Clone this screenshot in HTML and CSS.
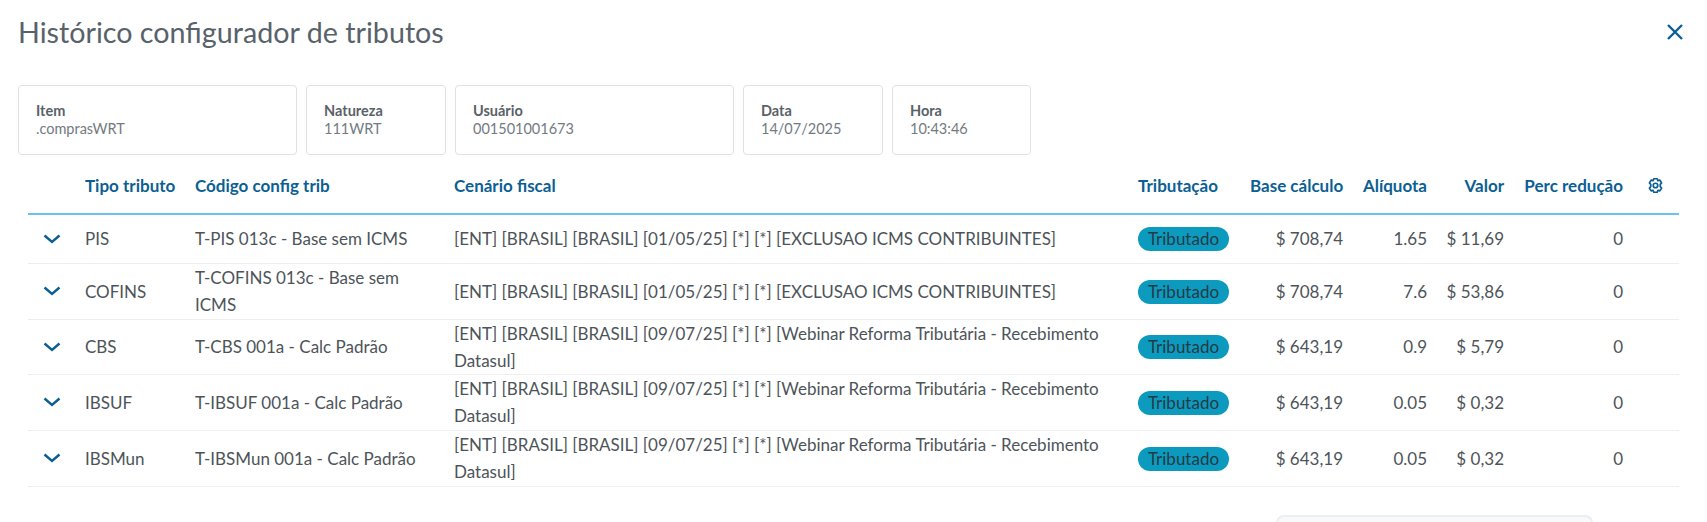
FILE: index.html
```html
<!DOCTYPE html>
<html lang="pt-BR">
<head>
    <meta charset="UTF-8">
    <title>Histórico configurador de tributos</title>
    <link rel="stylesheet" href="styles.css">
</head>
<body>
    <div class="modal">
        <div class="modal-header">
            <h1>Histórico configurador de tributos</h1>
            <button class="close" aria-label="Fechar">
                <svg width="18" height="18" viewBox="0 0 18 18"><path d="M2 2 L16 16 M16 2 L2 16" fill="none" stroke="#0c5f93" stroke-width="2.4"/></svg>
            </button>
        </div>
        <div class="cards">
            <div class="card card-item"><b>Item</b><span>.comprasWRT</span></div>
            <div class="card card-nat"><b>Natureza</b><span>111WRT</span></div>
            <div class="card card-user"><b>Usuário</b><span>001501001673</span></div>
            <div class="card card-date"><b>Data</b><span>14/07/2025</span></div>
            <div class="card card-hour"><b>Hora</b><span>10:43:46</span></div>
        </div>
        <table class="grid">
            <colgroup>
                <col class="c-exp"><col class="c-tipo"><col class="c-cod"><col class="c-cen"><col class="c-trib">
                <col class="c-base"><col class="c-aliq"><col class="c-valor"><col class="c-perc"><col class="c-cfg">
            </colgroup>
            <thead>
                <tr>
                    <th></th>
                    <th>Tipo tributo</th>
                    <th>Código config trib</th>
                    <th>Cenário fiscal</th>
                    <th>Tributação</th>
                    <th class="num">Base cálculo</th>
                    <th class="num">Alíquota</th>
                    <th class="num">Valor</th>
                    <th class="num">Perc redução</th>
                    <th class="cfg">
                        <svg width="17" height="17" viewBox="0 0 24 24" fill="none" stroke="#0c5f93" stroke-width="2.4" stroke-linejoin="round"><path d="M9.6 2.5 H14.4 L15.4 5.2 L18.2 4.4 L20.6 8.4 L18.7 10.5 V13.5 L20.6 15.6 L18.2 19.6 L15.4 18.8 L14.4 21.5 H9.6 L8.6 18.8 L5.8 19.6 L3.4 15.6 L5.3 13.5 V10.5 L3.4 8.4 L5.8 4.4 L8.6 5.2 Z"/><circle cx="12" cy="12" r="3.2"/></svg>
                    </th>
                </tr>
            </thead>
            <tbody id="rows"></tbody>
        </table>
        <div class="footer"><div class="pager"></div></div>
    </div>
    <script>
        const cenarioIcms = '[ENT] [BRASIL] [BRASIL] [01/05/25] [*] [*] [EXCLUSAO ICMS CONTRIBUINTES]';
        const cenarioWeb = '[ENT] [BRASIL] [BRASIL] [09/07/25] [*] [*] [Webinar Reforma Tributária - Recebimento Datasul]';

        const data = [
            ['PIS', 'T-PIS 013c - Base sem ICMS', cenarioIcms, '$ 708,74', '1.65', '$ 11,69', 49],
            ['COFINS', 'T-COFINS 013c - Base sem ICMS', cenarioIcms, '$ 708,74', '7.6', '$ 53,86', 56],
            ['CBS', 'T-CBS 001a - Calc Padrão', cenarioWeb, '$ 643,19', '0.9', '$ 5,79', 55],
            ['IBSUF', 'T-IBSUF 001a - Calc Padrão', cenarioWeb, '$ 643,19', '0.05', '$ 0,32', 56],
            ['IBSMun', 'T-IBSMun 001a - Calc Padrão', cenarioWeb, '$ 643,19', '0.05', '$ 0,32', 56]
        ];

        const chevron = '<svg width="18" height="10" viewBox="0 0 18 10"><path d="M1.5 1.5 L9 8 L16.5 1.5" fill="none" stroke="#0c5f93" stroke-width="2.4"/></svg>';

        document.getElementById('rows').innerHTML = data.map(row => `
            <tr style="height: ${row[6]}px">
                <td class="exp">${chevron}</td>
                <td>${row[0]}</td>
                <td>${row[1]}</td>
                <td>${row[2]}</td>
                <td><span class="tag">Tributado</span></td>
                <td class="num">${row[3]}</td>
                <td class="num">${row[4]}</td>
                <td class="num">${row[5]}</td>
                <td class="num">0</td>
                <td></td>
            </tr>`).join('');
    </script>
</body>
</html>
```
FILE: styles.css
```css
html, body {
    margin: 0;
    height: 100%;
    overflow: hidden;
    background: #fff;
}
body {
    font-family: Lato, "Noto Sans", sans-serif;
    color: #4d5459;
}
.modal {
    padding: 0 18px;
}
.modal-header {
    display: flex;
    justify-content: space-between;
    align-items: center;
    height: 63px;
}
.modal-header h1 {
    margin: 0;
    font-size: 28.7px;
    font-weight: 400;
    color: #58626a;
}
.close {
    border: none;
    background: none;
    padding: 0;
    margin-right: 5px;
    display: flex;
}
.cards {
    display: flex;
    gap: 9px;
    margin-top: 22px;
}
.card {
    box-sizing: border-box;
    height: 70px;
    padding: 16px 17px;
    border: 1px solid #dfe2e4;
    border-radius: 4px;
    display: flex;
    flex-direction: column;
    font-size: 14.5px;
    line-height: 18px;
}
.card b {
    font-weight: 700;
    color: #5a6268;
}
.card span {
    color: #737b81;
}
.card-item { width: 279px; }
.card-nat { width: 140px; }
.card-user { width: 279px; }
.card-date { width: 140px; }
.card-hour { width: 139px; }
.grid {
    table-layout: fixed;
    border-collapse: collapse;
    width: 1651px;
    margin: 0 0 0 10px;
    font-size: 17px;
}
.c-exp { width: 49px; }
.c-tipo { width: 110px; }
.c-cod { width: 259px; }
.c-cen { width: 684px; }
.c-trib { width: 112px; }
.c-base { width: 109px; }
.c-aliq { width: 84px; }
.c-valor { width: 77px; }
.c-perc { width: 119px; }
.c-cfg { width: 48px; }
.grid th {
    height: 51px;
    padding: 3px 8px 0;
    text-align: left;
    font-weight: 700;
    color: #0c5f93;
    border-bottom: 2px solid #6cc1f2;
    white-space: nowrap;
}
.grid td {
    padding: 0 8px;
    line-height: 27px;
    border-bottom: 1px solid #eceef0;
    vertical-align: middle;
}
.grid .num {
    text-align: right;
    white-space: nowrap;
}
.grid .cfg {
    text-align: center;
    padding: 7px 0 0;
}
.grid .exp {
    padding: 0 0 0 15px;
}
.exp svg {
    display: block;
}
.tag {
    display: inline-block;
    width: 91px;
    box-sizing: border-box;
    height: 24px;
    line-height: 23px;
    text-align: center;
    border-radius: 12px;
    background: #0c9abe;
    color: #243b47;
}
.footer {
    display: flex;
    justify-content: flex-end;
    padding: 28px 96px 0 0;
}
.pager {
    width: 317px;
    height: 8px;
    box-sizing: border-box;
    border: 2px solid #eceef0;
    border-bottom: none;
    border-radius: 14px 14px 0 0;
    background: #f7f9fa;
}
```
